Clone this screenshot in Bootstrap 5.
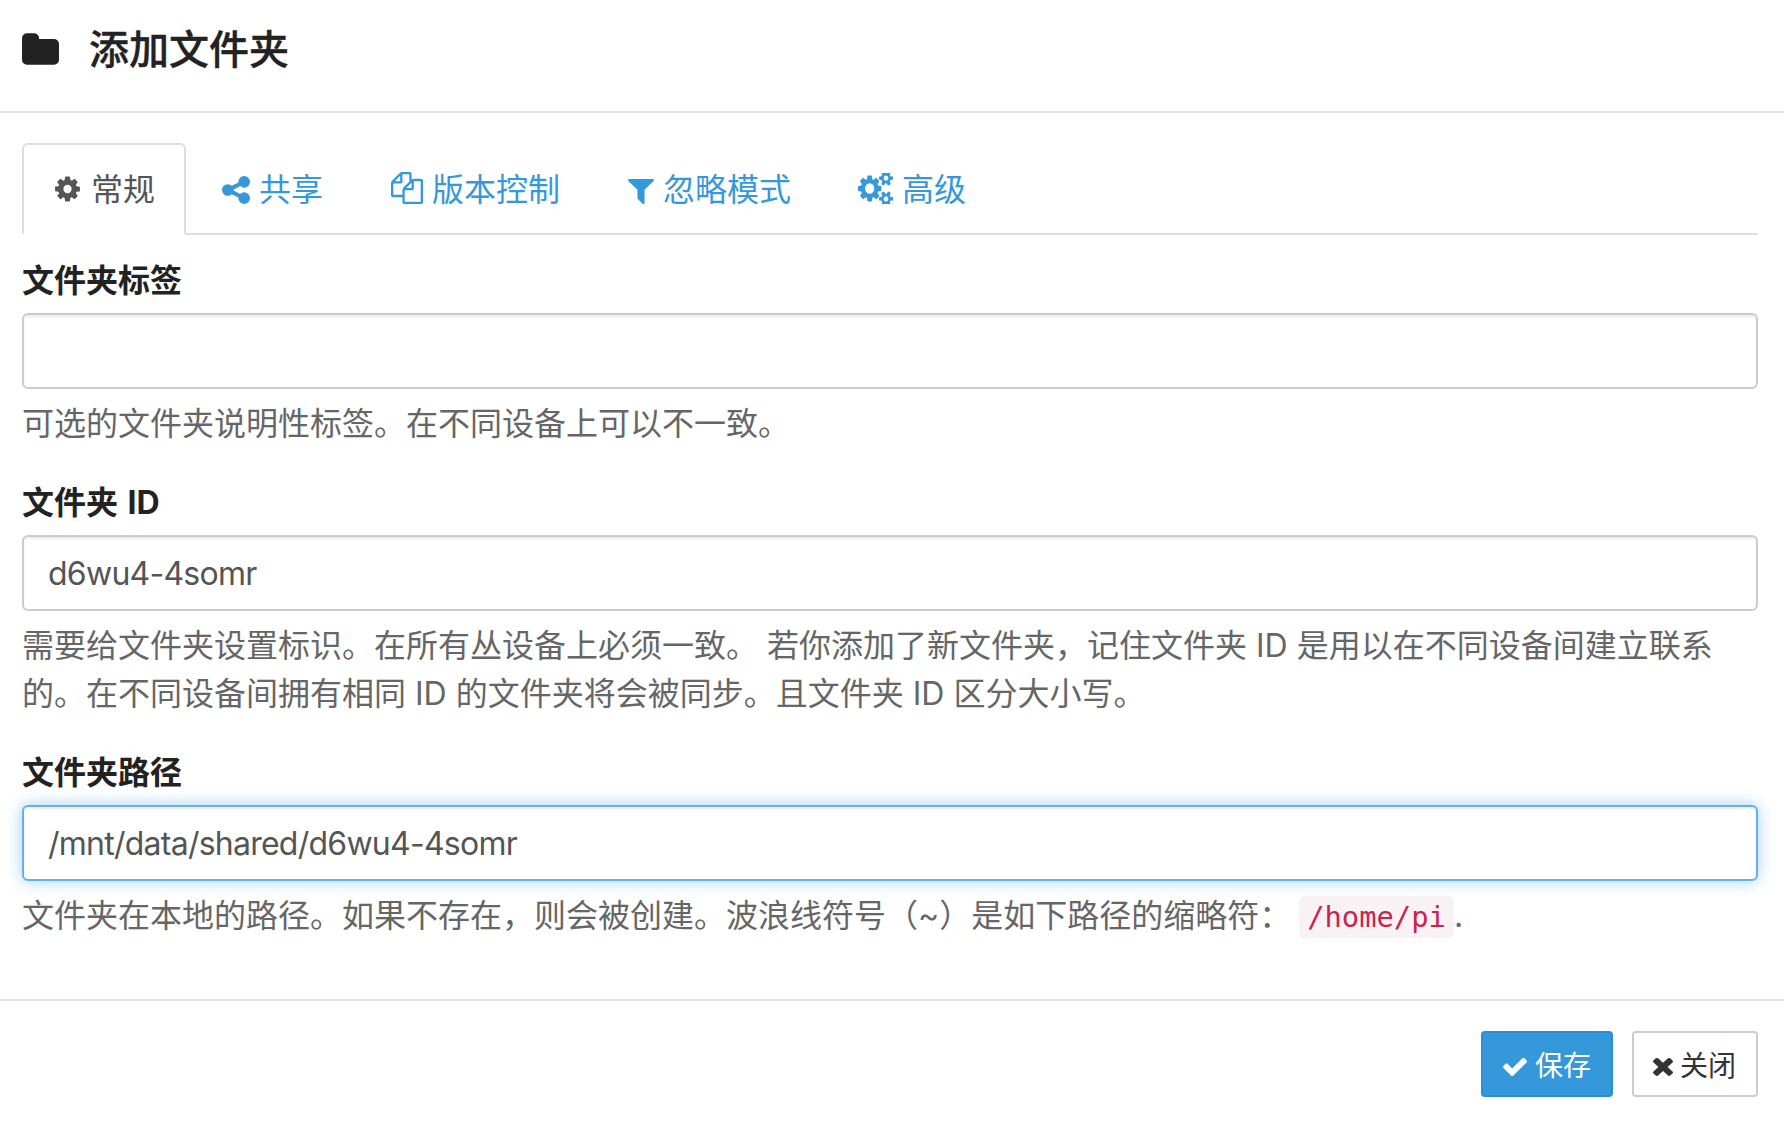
<!DOCTYPE html>
<html lang="zh">
<head>
<meta charset="utf-8">
<title>添加文件夹</title>
<link rel="stylesheet" href="https://cdn.jsdelivr.net/npm/bootstrap@5.3.0/dist/css/bootstrap.min.css">
<style>
html,body{background:#fff;}
body{font-family:"Inter","Noto Sans CJK SC",sans-serif;font-size:32px;line-height:1.5;color:#555;height:1124px;overflow:hidden;}
.ico{fill:currentColor;display:inline-block;vertical-align:-3px;}
.dlg-head{height:113px;border-bottom:2px solid #e5e5e5;padding:30px 22px 0;display:flex;align-items:flex-start;gap:30px;}
.dlg-head h4{font-size:40px;font-weight:500;color:#222;margin:0;line-height:40px;font-family:inherit;-webkit-text-stroke:.4px #222;}
.dlg-head svg{color:#222;width:37px;height:32px;margin-top:3px;}
.dlg-body{padding:30px 26px 0 22px;height:886px;}
.nav-tabs.tabbar{border-bottom:2px solid #ddd;height:92px;margin-bottom:22px;gap:2px;}
.tabbar .nav-link{font-size:32px;line-height:46px;padding:22px 30px 22px;color:#3498db;border:2px solid transparent;border-radius:6px 6px 0 0;margin-bottom:-2px;height:92px;}
.tabbar .nav-link.active{color:#555;border-color:#ddd #ddd #fff;background:#fff;padding-left:29px;padding-right:29px;}
.tabbar .nav-link.tab-share{padding-left:32px;}
.tabbar .nav-link.tab-files{padding-left:32px;padding-right:29px;}
.tabbar .nav-link.tab-filter{padding-left:33px;}
.tabbar .nav-link.tab-adv{padding-left:31px;}
.fld{margin-bottom:30px;}
.fld label{display:block;font-weight:700;color:#222;font-size:32px;line-height:47px;margin-bottom:9px;word-spacing:2px;}
.fld .form-control{height:76px;font-size:32px;letter-spacing:-.75px;color:#555;border:2px solid #ccc;border-radius:6px;padding:13px 24px 11px;box-shadow:inset 0 2px 2px rgba(0,0,0,.075);}
.fld .form-control.is-focus,.fld .form-control:focus{border-color:#66afe9;box-shadow:inset 0 2px 2px rgba(0,0,0,.075),0 0 16px rgba(102,175,233,.6);}
.fld .hint{font-size:32px;line-height:48.5px;color:#666;margin-top:11px;}
.hint code{font-family:"DejaVu Sans Mono",monospace;font-size:28.8px;color:#c7254e;background:#f9f2f4;border-radius:6px;padding:4px 8px;margin-left:-1px;}
.dlg-foot{border-top:2px solid #e5e5e5;height:125px;padding:30px 26px 0 0;display:flex;justify-content:flex-end;gap:19px;align-items:flex-start;}
.dlg-foot .btn{height:66px;font-size:28px;line-height:40px;border-radius:4px;border-width:2px;display:flex;align-items:center;}
.btn-save{background:#3498db;border-color:#2a8fd4;color:#fff;padding:12px 20px 8px 20px;gap:8px;}
.btn-close-x{background:#fff;border-color:#ccc;color:#333;padding:12px 20px 8px 19px;gap:7px;}
</style>
</head>
<body>
<div class="dlg-head">
  <svg class="ico" viewBox="64 128 1664 1408"><path d="M1728 608v704q0 92-66 158t-158 66h-1216q-92 0-158-66t-66-158v-960q0-92 66-158t158-66h320q92 0 158 66t66 158v32h672q92 0 158 66t66 158z"/></svg>
  <h4>添加文件夹</h4>
</div>
<div class="dlg-body">
  <ul class="nav nav-tabs tabbar">
    <li class="nav-item"><a class="nav-link active" href="#"><svg class="ico" width="29" height="30" viewBox="0 0 1792 1792"><path d="M1152 896q0-106-75-181t-181-75-181 75-75 181 75 181 181 75 181-75 75-181zm512-109v222q0 12-8 23t-20 13l-185 28q-19 54-39 91 35 50 107 138 10 12 10 25t-9 23q-27 37-99 108t-94 71q-12 0-26-9l-138-108q-44 23-91 38-16 136-29 186-7 28-36 28h-222q-14 0-24.5-8.5t-11.5-21.5l-28-184q-49-16-90-37l-141 107q-10 9-25 9-14 0-25-11-126-114-165-168-7-10-7-23 0-12 8-23 15-21 51-66.5t54-70.5q-27-50-41-99l-183-27q-13-2-21-12.5t-8-23.5v-222q0-12 8-23t19-13l186-28q14-46 39-92-40-57-107-138-10-12-10-24 0-10 9-23 26-36 98.5-107.5t94.5-71.5q13 0 26 10l138 107q44-23 91-38 16-136 29-186 7-28 36-28h222q14 0 24.5 8.5t11.5 21.5l28 184q49 16 90 37l142-107q9-9 24-9 13 0 25 10 129 119 165 170 7 8 7 22 0 12-8 23-15 21-51 66.5t-54 70.5q26 50 41 98l183 28q13 2 21 12.5t8 23.5z"/></svg> 常规</a></li>
    <li class="nav-item"><a class="nav-link tab-share" href="#"><svg class="ico" width="28" height="28" viewBox="128 128 1536 1536"><path d="M1344 1024q133 0 226.5 93.5t93.5 226.5-93.5 226.5-226.5 93.5-226.5-93.5-93.5-226.5q0-12 2-34l-360-180q-92 86-218 86-133 0-226.5-93.5t-93.5-226.5 93.5-226.5 226.5-93.5q126 0 218 86l360-180q-2-22-2-34 0-133 93.5-226.5t226.5-93.5 226.5 93.5 93.5 226.5-93.5 226.5-226.5 93.5q-126 0-218-86l-360 180q2 22 2 34t-2 34l360 180q92-86 218-86z"/></svg> 共享</a></li>
    <li class="nav-item"><a class="nav-link tab-files" href="#"><svg class="ico" width="32" height="32" viewBox="0 0 1792 1792"><path d="M1696 384q40 0 68 28t28 68v1216q0 40-28 68t-68 28h-960q-40 0-68-28t-28-68v-288h-544q-40 0-68-28t-28-68v-672q0-40 20-88t48-76l408-408q28-28 76-48t88-20h416q40 0 68 28t28 68v328q68-40 128-40h416zm-544 213l-299 299h299v-299zm-640-384l-299 299h299v-299zm196 647l316-316v-416h-384v416q0 40-28 68t-68 28h-416v640h512v-256q0-40 20-88t48-76zm956 804v-1152h-384v416q0 40-28 68t-68 28h-416v640h896z"/></svg> 版本控制</a></li>
    <li class="nav-item"><a class="nav-link tab-filter" href="#"><svg class="ico" width="26" height="25" viewBox="192 256 1408 1408" preserveAspectRatio="none"><path d="M1595 295q17 41-14 70l-493 493v742q0 42-39 59-13 5-25 5-27 0-45-19l-256-256q-19-19-19-45v-486l-493-493q-31-29-14-70 17-39 59-39h1280q42 0 59 39z"/></svg> 忽略模式</a></li>
    <li class="nav-item"><a class="nav-link tab-adv" href="#"><svg class="ico" width="35" height="31" viewBox="64 128 1920 1536" preserveAspectRatio="none"><path d="M960 896q0-106-75-181t-181-75-181 75-75 181 75 181 181 75 181-75 75-181zm768 512q0-52-38-90t-90-38-90 38-38 90q0 53 37.5 90.5t90.5 37.5 90.5-37.5 37.5-90.5zm0-1024q0-52-38-90t-90-38-90 38-38 90q0 53 37.5 90.5t90.5 37.5 90.5-37.5 37.5-90.5zm-384 421v185q0 10-7 19.5t-16 10.5l-155 24q-11 35-32 76 34 48 90 115 7 11 7 20 0 12-7 19-23 30-82.5 89.5t-78.5 59.5q-11 0-21-7l-115-90q-37 19-77 31-11 108-23 155-7 24-30 24h-186q-11 0-20-7.5t-10-17.5l-23-153q-34-10-75-31l-118 89q-7 7-20 7-11 0-21-8-144-133-144-160 0-9 7-19 10-14 41-53t47-61q-23-44-35-82l-152-24q-10-1-17-9.5t-7-19.5v-185q0-10 7-19.5t16-10.5l155-24q11-35 32-76-34-48-90-115-7-11-7-20 0-12 7-20 22-30 82-89t79-59q11 0 21 7l115 90q34-18 77-32 11-108 23-154 7-24 30-24h186q11 0 20 7.5t10 17.5l23 153q34 10 75 31l118-89q8-7 20-7 11 0 21 8 144 133 144 160 0 8-7 19-12 16-42 54t-45 60q23 48 34 82l152 23q10 2 17 10.5t7 19.5zm640 533v140q0 16-149 31-12 27-30 52 51 113 51 138 0 4-4 7-122 71-124 71-8 0-46-47t-52-68q-20 2-30 2t-30-2q-14 21-52 68t-46 47q-2 0-124-71-4-3-4-7 0-25 51-138-18-25-30-52-149-15-149-31v-140q0-16 149-31 13-29 30-52-51-113-51-138 0-4 4-7 4-2 35-20t59-34 30-16q8 0 46 46.5t52 67.5q20-2 30-2t30 2q51-71 92-112l6-2q4 0 124 70 4 3 4 7 0 25-51 138 17 23 30 52 149 15 149 31zm0-1024v140q0 16-149 31-12 27-30 52 51 113 51 138 0 4-4 7-122 71-124 71-8 0-46-47t-52-68q-20 2-30 2t-30-2q-14 21-52 68t-46 47q-2 0-124-71-4-3-4-7 0-25 51-138-18-25-30-52-149-15-149-31v-140q0-16 149-31 13-29 30-52-51-113-51-138 0-4 4-7 4-2 35-20t59-34 30-16q8 0 46 46.5t52 67.5q20-2 30-2t30 2q51-71 92-112l6-2q4 0 124 70 4 3 4 7 0 25-51 138 17 23 30 52 149 15 149 31z"/></svg> 高级</a></li>
  </ul>
  <div class="fld">
    <label for="f1">文件夹标签</label>
    <input id="f1" class="form-control" type="text" value="">
    <div class="hint">可选的文件夹说明性标签。在不同设备上可以不一致。</div>
  </div>
  <div class="fld">
    <label for="f2">文件夹 ID</label>
    <input id="f2" class="form-control" type="text" value="d6wu4-4somr">
    <div class="hint">需要给文件夹设置标识。在所有丛设备上必须一致。 若你添加了新文件夹，记住文件夹 ID 是用以在不同设备间建立联系的。在不同设备间拥有相同 ID 的文件夹将会被同步。且文件夹 ID 区分大小写。</div>
  </div>
  <div class="fld">
    <label for="f3">文件夹路径</label>
    <input id="f3" class="form-control is-focus" type="text" value="/mnt/data/shared/d6wu4-4somr">
    <div class="hint">文件夹在本地的路径。如果不存在，则会被创建。波浪线符号（~）是如下路径的缩略符： <code>/home/pi</code>.</div>
  </div>
</div>
<div class="dlg-foot">
  <button type="button" class="btn btn-save"><svg class="ico" width="24" height="19" viewBox="121 278 1550 1236" preserveAspectRatio="none"><path d="M1671 566q0 40-28 68l-724 724-136 136q-28 28-68 28t-68-28l-136-136-362-362q-28-28-28-68t28-68l136-136q28-28 68-28t68 28l294 295 656-657q28-28 68-28t68 28l136 136q28 28 28 68z"/></svg> 保存</button>
  <button type="button" class="btn btn-close-x"><svg class="ico" width="20" height="20" viewBox="302 238 1188 1316" preserveAspectRatio="none"><path d="M1490 1322q0 40-28 68l-136 136q-28 28-68 28t-68-28l-294-294-294 294q-28 28-68 28t-68-28l-136-136q-28-28-28-68t28-68l294-294-294-294q-28-28-28-68t28-68l136-136q28-28 68-28t68 28l294 294 294-294q28-28 68-28t68 28l136 136q28 28 28 68t-28 68l-294 294 294 294q28 28 28 68z"/></svg> 关闭</button>
</div>
<script src="https://cdn.jsdelivr.net/npm/bootstrap@5.3.0/dist/js/bootstrap.bundle.min.js"></script>
</body>
</html>
